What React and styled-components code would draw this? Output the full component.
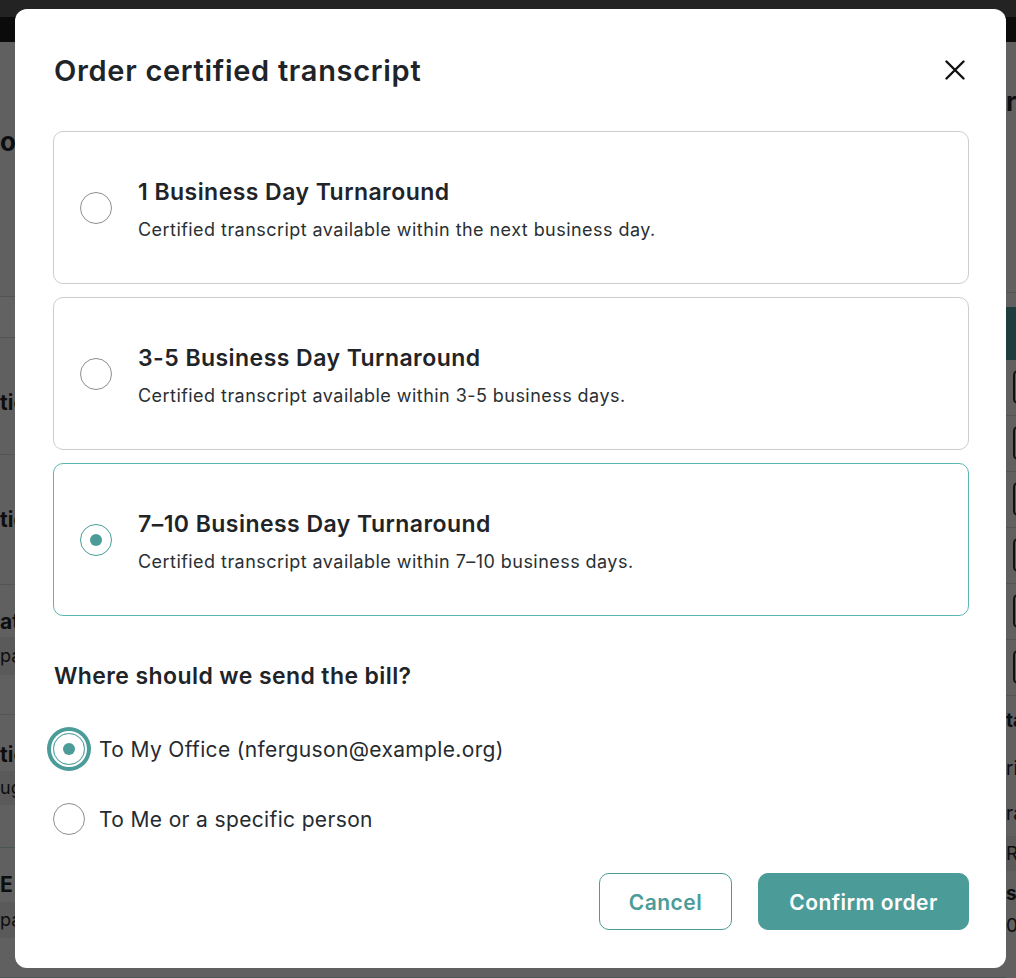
import React, { useState } from 'react';
import styled, { createGlobalStyle } from 'styled-components';

const GlobalStyle = createGlobalStyle`
  * { box-sizing: border-box; }
  html, body {
    margin: 0;
    padding: 0;
    background: #f1f1f1;
    font-family: Inter, "Noto Sans", "Liberation Sans", sans-serif;
    color: #1f2428;
    overflow: hidden;
  }
`;

const TEAL = '#4b9c98';

/* ---------- page behind the dialog ---------- */

const Page = styled.div`
  width: 1016px;
  height: 978px;
  display: flex;
  flex-direction: column;
`;

const TopStrip = styled.div`
  height: 17px;
  background: #585858;
`;

const NavBar = styled.div`
  height: 25px;
  background: #1d1d1d;
`;

const Main = styled.div`
  flex: 1;
  display: flex;
  overflow: hidden;
`;

const LeftPane = styled.div`
  flex: 1;
  display: flex;
  flex-direction: column;
  white-space: nowrap;
`;

const RightPane = styled.div`
  width: 10px;
  overflow: hidden;
  display: flex;
  flex-direction: column;
  white-space: nowrap;
`;

const Intro = styled.div`
  height: ${({ $h }) => $h}px;
  padding-top: ${({ $pt }) => $pt}px;
  border-bottom: 1px solid #d2d2d2;
`;

const PageHeading = styled.div`
  font-size: 26px;
  font-weight: 700;
  line-height: 30px;
`;

const Band = styled.div`
  height: ${({ $h }) => $h}px;
  margin-top: ${({ $mt = 0 }) => $mt}px;
  background: ${({ $bg = '#e2e2e2' }) => $bg};
  border-bottom: ${({ $line }) => ($line ? '1px solid #d2d2d2' : 'none')};
  font-size: 18px;
  line-height: ${({ $h }) => $h}px;
`;

const Section = styled.div`
  height: ${({ $h }) => $h}px;
  padding-top: ${({ $pt }) => $pt}px;
  border-bottom: 1px solid ${({ $accent }) => ($accent ? '#b8d6d4' : '#d2d2d2')};
  display: flex;
  flex-direction: column;
`;

const SectionLabel = styled.div`
  font-size: 21px;
  font-weight: 700;
  line-height: 26px;
`;

const TableHead = styled.div`
  height: 53px;
  margin-top: 14px;
  background: #4e9a96;
`;

const TableRow = styled.div`
  height: 56px;
  border-bottom: 1px solid #d2d2d2;
  padding: 10px 0 0 7px;
`;

const RowButton = styled.div`
  width: 40px;
  height: 34px;
  border: 2px solid #2b2b2b;
  border-radius: 5px;
`;

const Meta = styled.div`
  font-size: 19px;
  font-weight: ${({ $bold }) => ($bold ? 700 : 400)};
  line-height: ${({ $lh = 45 }) => $lh}px;
  background: ${({ $bg = 'transparent' }) => $bg};
`;

/* ---------- dialog ---------- */

const Overlay = styled.div`
  position: fixed;
  inset: 0;
  background: rgba(0, 0, 0, 0.6);
  display: flex;
  align-items: flex-start;
  padding: 9px 0 0 15px;
`;

const Dialog = styled.div`
  width: 991px;
  background: #fff;
  border-radius: 12px;
  padding: 38px 37px 38px 38px;
  display: flex;
  flex-direction: column;
`;

const Header = styled.div`
  height: 48px;
  display: flex;
  align-items: center;
  justify-content: space-between;
`;

const Title = styled.h2`
  margin: 0 0 0 1px;
  font-size: 29px;
  font-weight: 600;
  line-height: 48px;
  letter-spacing: 0.7px;
  color: #1f2428;
`;

const CloseButton = styled.button`
  width: 28px;
  height: 28px;
  margin-top: -2px;
  padding: 0;
  border: none;
  background: none;
  display: flex;
  align-items: center;
  justify-content: center;
  cursor: pointer;
`;

const Options = styled.div`
  margin-top: 36px;
  display: flex;
  flex-direction: column;
  gap: 13px;
`;

const OptionCard = styled.label`
  height: 153px;
  border: 1px solid ${({ $selected }) => ($selected ? '#5cb7b2' : '#cdcdcd')};
  border-radius: 10px;
  padding: 5px 26px 0;
  display: flex;
  align-items: center;
  gap: 26px;
  cursor: pointer;
`;

const Radio = styled.span`
  flex: 0 0 auto;
  width: 32px;
  height: 32px;
  border-radius: 50%;
  border: 1px solid ${({ $checked }) => ($checked ? TEAL : '#8e8e93')};
  display: flex;
  align-items: center;
  justify-content: center;
  margin-top: ${({ $shift = 0 }) => $shift}px;
  box-shadow: ${({ $focused }) =>
    $focused ? `0 0 0 2px #fff, 0 0 0 6px ${TEAL}` : 'none'};

  &::after {
    content: '';
    width: 12px;
    height: 12px;
    border-radius: 50%;
    background: ${TEAL};
    display: ${({ $checked }) => ($checked ? 'block' : 'none')};
  }
`;

const OptionText = styled.div`
  display: flex;
  flex-direction: column;
  gap: 12px;
`;

const OptionTitle = styled.div`
  font-size: 23px;
  font-weight: 600;
  line-height: 28px;
  letter-spacing: 0.45px;
  color: #1f2428;
`;

const OptionDesc = styled.div`
  font-size: 18px;
  line-height: 24px;
  letter-spacing: 0.45px;
  color: #2a2f33;
`;

const BillHeading = styled.h3`
  margin: 45px 0 0 1px;
  font-size: 23px;
  font-weight: 600;
  line-height: 30px;
  letter-spacing: 0.4px;
  color: #1f2428;
`;

const BillList = styled.div`
  margin-top: 36px;
  display: flex;
  flex-direction: column;
  gap: 26px;
`;

const BillRow = styled.label`
  height: 44px;
  display: flex;
  align-items: center;
  gap: 14px;
  cursor: pointer;
`;

const BillLabel = styled.span`
  padding-top: 2px;
  font-size: 21px;
  line-height: 26px;
  letter-spacing: 0.35px;
  color: #262b2f;
`;

const Footer = styled.div`
  margin-top: 32px;
  display: flex;
  justify-content: flex-end;
  gap: 26px;
`;

const Button = styled.button`
  height: 57px;
  width: ${({ $w }) => $w}px;
  border-radius: 10px;
  border: 1px solid ${TEAL};
  background: ${({ $primary }) => ($primary ? TEAL : '#fff')};
  color: ${({ $primary }) => ($primary ? '#fff' : TEAL)};
  font-family: inherit;
  font-size: 21px;
  font-weight: 600;
  letter-spacing: 0.5px;
  padding-top: 2px;
  cursor: pointer;
`;

const turnarounds = [
  {
    id: '1',
    title: '1 Business Day Turnaround',
    desc: 'Certified transcript available within the next business day.',
  },
  {
    id: '3-5',
    title: '3-5 Business Day Turnaround',
    desc: 'Certified transcript available within 3-5 business days.',
  },
  {
    id: '7-10',
    title: '7–10 Business Day Turnaround',
    desc: 'Certified transcript available within 7–10 business days.',
  },
];

const billTargets = [
  { id: 'office', label: 'To My Office (nferguson@example.org)' },
  { id: 'person', label: 'To Me or a specific person' },
];

function Background() {
  return (
    <Page>
      <TopStrip />
      <NavBar />
      <Main>
        <LeftPane>
          <Intro $h={255} $pt={85}>
            <PageHeading>o</PageHeading>
          </Intro>
          <Band $h={41} $bg="#f6f6f6" $line />
          <Section $h={117} $pt={52}>
            <SectionLabel>tion</SectionLabel>
          </Section>
          <Section $h={130} $pt={52}>
            <SectionLabel>tion</SectionLabel>
          </Section>
          <Section $h={130} $pt={24}>
            <SectionLabel>ate</SectionLabel>
            <Band $h={38} $mt={2}>pa</Band>
          </Section>
          <Section $h={133} $pt={27} $accent>
            <SectionLabel>tion</SectionLabel>
            <Band $h={34} $mt={3}>ug</Band>
          </Section>
          <Section $h={130} $pt={24} $accent>
            <SectionLabel>E</SectionLabel>
            <Band $h={36} $mt={4}>pa</Band>
          </Section>
        </LeftPane>
        <RightPane>
          <Intro $h={251} $pt={45}>
            <PageHeading>r</PageHeading>
          </Intro>
          <TableHead />
          {[0, 1, 2, 3, 4, 5].map((i) => (
            <TableRow key={i}>
              <RowButton />
            </TableRow>
          ))}
          <Meta $bold $lh={50}>ta</Meta>
          <Meta>ri</Meta>
          <Meta>ra</Meta>
          <Meta $lh={35} $bg="#e2e2e2">Ro</Meta>
          <Meta $bold>s</Meta>
          <Meta $lh={20}>00</Meta>
        </RightPane>
      </Main>
    </Page>
  );
}

export default function App() {
  const [turnaround, setTurnaround] = useState('7-10');
  const [billTo, setBillTo] = useState('office');

  return (
    <>
      <GlobalStyle />
      <Background />
      <Overlay>
        <Dialog role="dialog" aria-modal="true">
          <Header>
            <Title>Order certified transcript</Title>
            <CloseButton aria-label="Close">
              <svg width="20" height="20" viewBox="0 0 20 20" fill="none">
                <path
                  d="M1.5 1.5 L18.5 18.5 M18.5 1.5 L1.5 18.5"
                  stroke="#111"
                  strokeWidth="2.4"
                  strokeLinecap="round"
                />
              </svg>
            </CloseButton>
          </Header>

          <Options>
            {turnarounds.map((t) => (
              <OptionCard
                key={t.id}
                $selected={turnaround === t.id}
                onClick={() => setTurnaround(t.id)}
              >
                <Radio $checked={turnaround === t.id} $shift={-5} />
                <OptionText>
                  <OptionTitle>{t.title}</OptionTitle>
                  <OptionDesc>{t.desc}</OptionDesc>
                </OptionText>
              </OptionCard>
            ))}
          </Options>

          <BillHeading>Where should we send the bill?</BillHeading>
          <BillList>
            {billTargets.map((b) => (
              <BillRow key={b.id} onClick={() => setBillTo(b.id)}>
                <Radio
                  $checked={billTo === b.id}
                  $focused={billTo === b.id}
                />
                <BillLabel>{b.label}</BillLabel>
              </BillRow>
            ))}
          </BillList>

          <Footer>
            <Button $w={133}>Cancel</Button>
            <Button $w={211} $primary>Confirm order</Button>
          </Footer>
        </Dialog>
      </Overlay>
    </>
  );
}
